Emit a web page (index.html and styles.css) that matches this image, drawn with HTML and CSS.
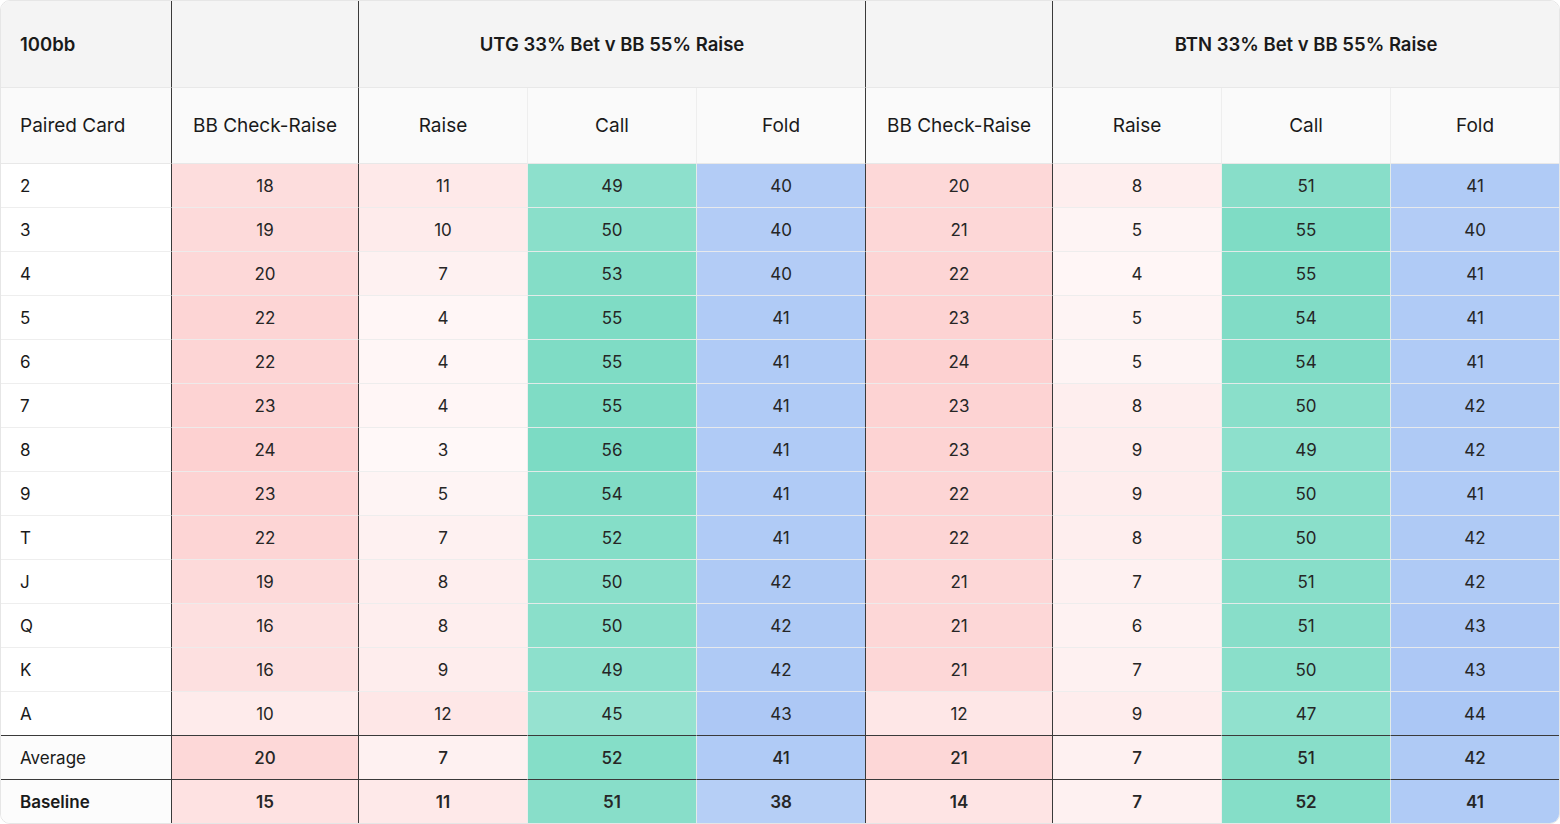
FILE: index.html
```html
<!DOCTYPE html>
<html lang="en">
<head>
<meta charset="utf-8">
<title>Paired Card Check-Raise</title>
<link rel="stylesheet" href="styles.css">
</head>
<body>
<div class="card">
<table class="grid">
<colgroup>
<col class="w-label"><col class="w-wide"><col class="w-std"><col class="w-std"><col class="w-std"><col class="w-wide"><col class="w-std"><col class="w-std"><col class="w-last">
</colgroup>
<thead>
<tr class="head-top">
<th class="label dark">100bb</th>
<th class="dark"></th>
<th class="dark" colspan="3">UTG 33% Bet v BB 55% Raise</th>
<th class="dark"></th>
<th class="end" colspan="3">BTN 33% Bet v BB 55% Raise</th>
</tr>
<tr class="head-sub">
<th class="label dark">Paired Card</th>
<th class="dark">BB Check-Raise</th>
<th>Raise</th>
<th>Call</th>
<th class="dark">Fold</th>
<th class="dark">BB Check-Raise</th>
<th>Raise</th>
<th>Call</th>
<th class="end">Fold</th>
</tr>
</thead>
<tbody>
<tr><td class="label dark">2</td><td class="red dark" style="--a:.18">18</td><td class="red" style="--a:.11">11</td><td class="green" style="--a:.49">49</td><td class="blue dark" style="--a:.40">40</td><td class="red dark" style="--a:.20">20</td><td class="red" style="--a:.08">8</td><td class="green" style="--a:.51">51</td><td class="blue end" style="--a:.41">41</td></tr>
<tr><td class="label dark">3</td><td class="red dark" style="--a:.19">19</td><td class="red" style="--a:.10">10</td><td class="green" style="--a:.50">50</td><td class="blue dark" style="--a:.40">40</td><td class="red dark" style="--a:.21">21</td><td class="red" style="--a:.05">5</td><td class="green" style="--a:.55">55</td><td class="blue end" style="--a:.40">40</td></tr>
<tr><td class="label dark">4</td><td class="red dark" style="--a:.20">20</td><td class="red" style="--a:.07">7</td><td class="green" style="--a:.53">53</td><td class="blue dark" style="--a:.40">40</td><td class="red dark" style="--a:.22">22</td><td class="red" style="--a:.04">4</td><td class="green" style="--a:.55">55</td><td class="blue end" style="--a:.41">41</td></tr>
<tr><td class="label dark">5</td><td class="red dark" style="--a:.22">22</td><td class="red" style="--a:.04">4</td><td class="green" style="--a:.55">55</td><td class="blue dark" style="--a:.41">41</td><td class="red dark" style="--a:.23">23</td><td class="red" style="--a:.05">5</td><td class="green" style="--a:.54">54</td><td class="blue end" style="--a:.41">41</td></tr>
<tr><td class="label dark">6</td><td class="red dark" style="--a:.22">22</td><td class="red" style="--a:.04">4</td><td class="green" style="--a:.55">55</td><td class="blue dark" style="--a:.41">41</td><td class="red dark" style="--a:.24">24</td><td class="red" style="--a:.05">5</td><td class="green" style="--a:.54">54</td><td class="blue end" style="--a:.41">41</td></tr>
<tr><td class="label dark">7</td><td class="red dark" style="--a:.23">23</td><td class="red" style="--a:.04">4</td><td class="green" style="--a:.55">55</td><td class="blue dark" style="--a:.41">41</td><td class="red dark" style="--a:.23">23</td><td class="red" style="--a:.08">8</td><td class="green" style="--a:.50">50</td><td class="blue end" style="--a:.42">42</td></tr>
<tr><td class="label dark">8</td><td class="red dark" style="--a:.24">24</td><td class="red" style="--a:.03">3</td><td class="green" style="--a:.56">56</td><td class="blue dark" style="--a:.41">41</td><td class="red dark" style="--a:.23">23</td><td class="red" style="--a:.09">9</td><td class="green" style="--a:.49">49</td><td class="blue end" style="--a:.42">42</td></tr>
<tr><td class="label dark">9</td><td class="red dark" style="--a:.23">23</td><td class="red" style="--a:.05">5</td><td class="green" style="--a:.54">54</td><td class="blue dark" style="--a:.41">41</td><td class="red dark" style="--a:.22">22</td><td class="red" style="--a:.09">9</td><td class="green" style="--a:.50">50</td><td class="blue end" style="--a:.41">41</td></tr>
<tr><td class="label dark">T</td><td class="red dark" style="--a:.22">22</td><td class="red" style="--a:.07">7</td><td class="green" style="--a:.52">52</td><td class="blue dark" style="--a:.41">41</td><td class="red dark" style="--a:.22">22</td><td class="red" style="--a:.08">8</td><td class="green" style="--a:.50">50</td><td class="blue end" style="--a:.42">42</td></tr>
<tr><td class="label dark">J</td><td class="red dark" style="--a:.19">19</td><td class="red" style="--a:.08">8</td><td class="green" style="--a:.50">50</td><td class="blue dark" style="--a:.42">42</td><td class="red dark" style="--a:.21">21</td><td class="red" style="--a:.07">7</td><td class="green" style="--a:.51">51</td><td class="blue end" style="--a:.42">42</td></tr>
<tr><td class="label dark">Q</td><td class="red dark" style="--a:.16">16</td><td class="red" style="--a:.08">8</td><td class="green" style="--a:.50">50</td><td class="blue dark" style="--a:.42">42</td><td class="red dark" style="--a:.21">21</td><td class="red" style="--a:.06">6</td><td class="green" style="--a:.51">51</td><td class="blue end" style="--a:.43">43</td></tr>
<tr><td class="label dark">K</td><td class="red dark" style="--a:.16">16</td><td class="red" style="--a:.09">9</td><td class="green" style="--a:.49">49</td><td class="blue dark" style="--a:.42">42</td><td class="red dark" style="--a:.21">21</td><td class="red" style="--a:.07">7</td><td class="green" style="--a:.50">50</td><td class="blue end" style="--a:.43">43</td></tr>
<tr class="before-sum"><td class="label dark">A</td><td class="red dark" style="--a:.10">10</td><td class="red" style="--a:.12">12</td><td class="green" style="--a:.45">45</td><td class="blue dark" style="--a:.43">43</td><td class="red dark" style="--a:.12">12</td><td class="red" style="--a:.09">9</td><td class="green" style="--a:.47">47</td><td class="blue end" style="--a:.44">44</td></tr>
<tr class="sum avg"><td class="label dark">Average</td><td class="red dark" style="--a:.20">20</td><td class="red" style="--a:.07">7</td><td class="green" style="--a:.52">52</td><td class="blue dark" style="--a:.41">41</td><td class="red dark" style="--a:.21">21</td><td class="red" style="--a:.07">7</td><td class="green" style="--a:.51">51</td><td class="blue end" style="--a:.42">42</td></tr>
<tr class="sum base"><td class="label dark">Baseline</td><td class="red dark" style="--a:.15">15</td><td class="red" style="--a:.11">11</td><td class="green" style="--a:.51">51</td><td class="blue dark" style="--a:.38">38</td><td class="red dark" style="--a:.14">14</td><td class="red" style="--a:.07">7</td><td class="green" style="--a:.52">52</td><td class="blue end" style="--a:.41">41</td></tr>
</tbody>
</table>
</div>
</body>
</html>
```
FILE: styles.css
```css
html, body {
  margin: 0;
  padding: 0;
  background: #ffffff;
}

body {
  font-family: Inter, "Noto Sans", "Liberation Sans", sans-serif;
  color: #1f1f1f;
}

.card {
  width: 1560px;
  height: 824px;
  box-sizing: border-box;
  border: 1px solid #e6e6e6;
  border-radius: 10px;
  overflow: hidden;
  background: #ffffff;
}

.grid {
  width: 1558px;
  table-layout: fixed;
  border-collapse: separate;
  border-spacing: 0;
}

.w-label { width: 171px; }
.w-wide { width: 187px; }
.w-std { width: 169px; }
.w-last { width: 168px; }

.grid th,
.grid td {
  box-sizing: border-box;
  padding: 0 8px;
  text-align: center;
  vertical-align: middle;
  border-right: 1px solid rgba(236, 236, 236, 0.9);
  border-bottom: 1px solid rgba(236, 236, 236, 0.9);
  white-space: nowrap;
}

.grid .label {
  text-align: left;
  padding-left: 19px;
}

.grid .dark {
  border-right-color: #3a3a3a;
}

.grid .end {
  border-right: none;
}

.head-top th {
  height: 87px;
  background: #f4f4f4;
  font-size: 18.5px;
  font-weight: 600;
  color: #1a1a1a;
  border-bottom-color: #e8e8e8;
}

.head-sub th {
  height: 76px;
  background: #fafafa;
  font-size: 19px;
  font-weight: 400;
  color: #1a1a1a;
  border-bottom-color: #e8e8e8;
}

.grid td {
  height: 44px;
  font-size: 17px;
  font-weight: 400;
  color: #262626;
}

.grid td.label {
  color: #1a1a1a;
}

.red { background: rgba(246, 72, 72, calc(var(--a) + 0.01)); }
.green { background: rgba(22, 191, 150, var(--a)); }
.blue { background: rgba(64, 128, 232, var(--a)); }

.before-sum td {
  border-bottom-color: #3a3a3a;
}

.avg td {
  border-bottom-color: #3a3a3a;
  font-weight: 500;
}

.sum td.label {
  background: #fcfcfc;
}

.avg td.label {
  font-weight: 400;
}

.base td {
  height: 43px;
  border-bottom: none;
  font-weight: 600;
}
```
